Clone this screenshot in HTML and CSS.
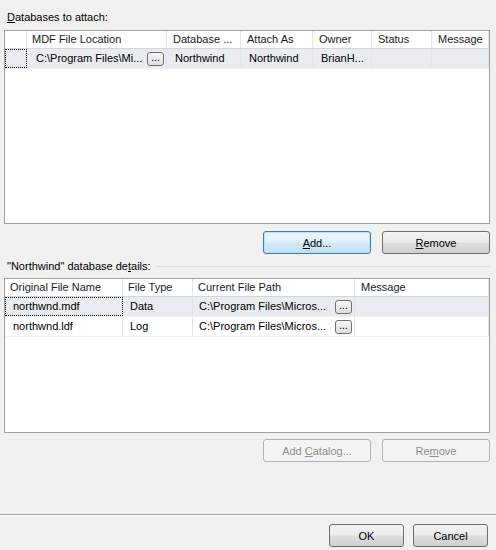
FILE: index.html
```html
<!DOCTYPE html>
<html>
<head>
<meta charset="utf-8">
<link rel="stylesheet" href="styles.css">
</head>
<body>
<div class="dialog">
  <div class="label top-label"><u>D</u>atabases to attach:</div>
  <div class="grid grid1">
    <div class="row head">
      <div class="c">&nbsp;</div>
      <div class="c">MDF File Location</div>
      <div class="c">Database ...</div>
      <div class="c">Attach As</div>
      <div class="c">Owner</div>
      <div class="c">Status</div>
      <div class="c">Message</div>
    </div>
    <div class="row sel">
      <div class="c focus"></div>
      <div class="c btncell"><span class="txt">C:\Program Files\Mi...</span><span class="ell">...</span></div>
      <div class="c">Northwind</div>
      <div class="c">Northwind</div>
      <div class="c">BrianH...</div>
      <div class="c"></div>
      <div class="c"></div>
    </div>
  </div>
  <div class="btnrow">
    <button class="btn default"><u>A</u>dd...</button>
    <button class="btn"><u>R</u>emove</button>
  </div>
  <div class="section">
    <span class="label">"Northwind" database de<u>t</u>ails:</span>
    <span class="rule"></span>
  </div>
  <div class="grid grid2">
    <div class="row head">
      <div class="c">Original File Name</div>
      <div class="c">File Type</div>
      <div class="c">Current File Path</div>
      <div class="c">Message</div>
    </div>
    <div class="row sel">
      <div class="c focus">northwnd.mdf</div>
      <div class="c">Data</div>
      <div class="c btncell"><span class="txt">C:\Program Files\Micros...</span><span class="ell">...</span></div>
      <div class="c"></div>
    </div>
    <div class="row">
      <div class="c">northwnd.ldf</div>
      <div class="c">Log</div>
      <div class="c btncell"><span class="txt">C:\Program Files\Micros...</span><span class="ell">...</span></div>
      <div class="c"></div>
    </div>
  </div>
  <div class="btnrow btnrow2">
    <button class="btn disabled">Add <u>C</u>atalog...</button>
    <button class="btn disabled">Re<u>m</u>ove</button>
  </div>
  <div class="spacer"></div>
  <div class="footer">
    <button class="btn small">OK</button>
    <button class="btn small">Cancel</button>
  </div>
</div>
</body>
</html>
```
FILE: styles.css
```css
html, body {
  margin: 0;
  padding: 0;
  background: #f0f0f0;
}
body {
  width: 496px;
  height: 550px;
  overflow: hidden;
  font-family: "Liberation Sans", Arial, sans-serif;
  font-size: 11px;
  color: #000;
}
.dialog {
  display: flex;
  flex-direction: column;
  height: 550px;
  box-sizing: border-box;
}
.label {
  color: #000;
  line-height: 13px;
}
.top-label {
  margin: 11px 0 0 7px;
}
.grid {
  margin: 6px 6px 0 4px;
  background: #fff;
  border: 1px solid #a0a0a0;
  box-sizing: border-box;
}
.grid1 {
  height: 194px;
}
.grid2 {
  height: 155px;
  margin-top: 5px;
}
.row {
  display: grid;
  height: 20px;
  box-sizing: border-box;
  border-bottom: 1px solid #f0f0f0;
}
.grid1 .row {
  grid-template-columns: 22px 140px 74px 72px 59px 60px 57px;
}
.grid2 .row {
  grid-template-columns: 118px 70px 162px 134px;
}
.row.head {
  height: 18px;
  border-bottom: 1px solid #d5d5d5;
  background: #fff;
}
.row.sel {
  background: #e8ebf0;
}
.c {
  border-right: 1px solid #e4e4e4;
  padding: 0 5px 0 8px;
  line-height: 19px;
  white-space: nowrap;
  overflow: hidden;
  box-sizing: border-box;
}
.grid1 .row .c:first-child {
  background: #f0f0f0;
}
.grid1 .row.sel .c:first-child {
  background: #e8ebf0;
}
.grid1 .row .btncell {
  padding-left: 9px;
}
.grid2 .row .c:nth-child(1) {
  padding-left: 8px;
}
.grid2 .row .c:nth-child(2) {
  padding-left: 7px;
}
.grid2 .row .btncell {
  padding-left: 6px;
}
.row.head .c {
  line-height: 17px;
  padding-left: 6px;
  color: #1a1a1a;
}
.grid1 .row.head .c:first-child {
  background: #fff;
}
.grid1 .row.head .c:nth-child(2) {
  padding-left: 5px;
}
.grid2 .row.head .c {
  padding-left: 5px;
}
.grid2 .row.head .c:nth-child(4) {
  padding-left: 6px;
}
.focus {
  outline: 1px dotted #000;
  outline-offset: -1px;
}
.btncell {
  display: flex;
  align-items: center;
  justify-content: space-between;
  padding-right: 2px;
}
.btncell .txt {
  overflow: hidden;
}
.ell {
  display: inline-block;
  width: 17px;
  height: 14px;
  box-sizing: border-box;
  border: 1px solid #707070;
  border-radius: 3px;
  background: linear-gradient(#f6f6f6, #dedede);
  line-height: 9px;
  text-align: center;
  font-size: 10px;
  color: #000;
  flex: none;
}
.btnrow {
  display: flex;
  justify-content: flex-end;
  gap: 11px;
  margin: 7px 6px 0 0;
}
.btnrow2 {
  margin-top: 6px;
}
.btn {
  font-family: "Liberation Sans", Arial, sans-serif;
  font-size: 11px;
  width: 108px;
  height: 23px;
  box-sizing: border-box;
  border: 1px solid #707070;
  border-radius: 3px;
  background: linear-gradient(#f2f2f2 0%, #ebebeb 48%, #dddddd 52%, #cfcfcf 100%);
  color: #000;
  padding: 0;
  margin: 0;
  line-height: 20px;
}
.btn.default {
  border-color: #3c7fb1;
  background: linear-gradient(#eef6fc 0%, #e3f0fa 48%, #d3e8f7 52%, #c6e0f3 100%);
  box-shadow: inset 0 0 0 1px #b8e1f7;
}
.btn.disabled {
  border-color: #adb2b5;
  background: #f4f4f4;
  color: #8d8d8d;
}
.btn.small {
  width: 75px;
}
.section {
  display: flex;
  align-items: center;
  margin: 6px 6px 0 7px;
  height: 13px;
}
.section .rule {
  flex: 1;
  height: 0;
  border-top: 1px solid #d5dfe5;
  margin-left: 5px;
}
.spacer {
  flex: 1;
  border-bottom: 1px solid #a0a0a0;
  box-shadow: 0 1px 0 #fff;
}
.footer {
  display: flex;
  justify-content: flex-end;
  gap: 9px;
  margin: 9px 8px 3px 0;
}
```
